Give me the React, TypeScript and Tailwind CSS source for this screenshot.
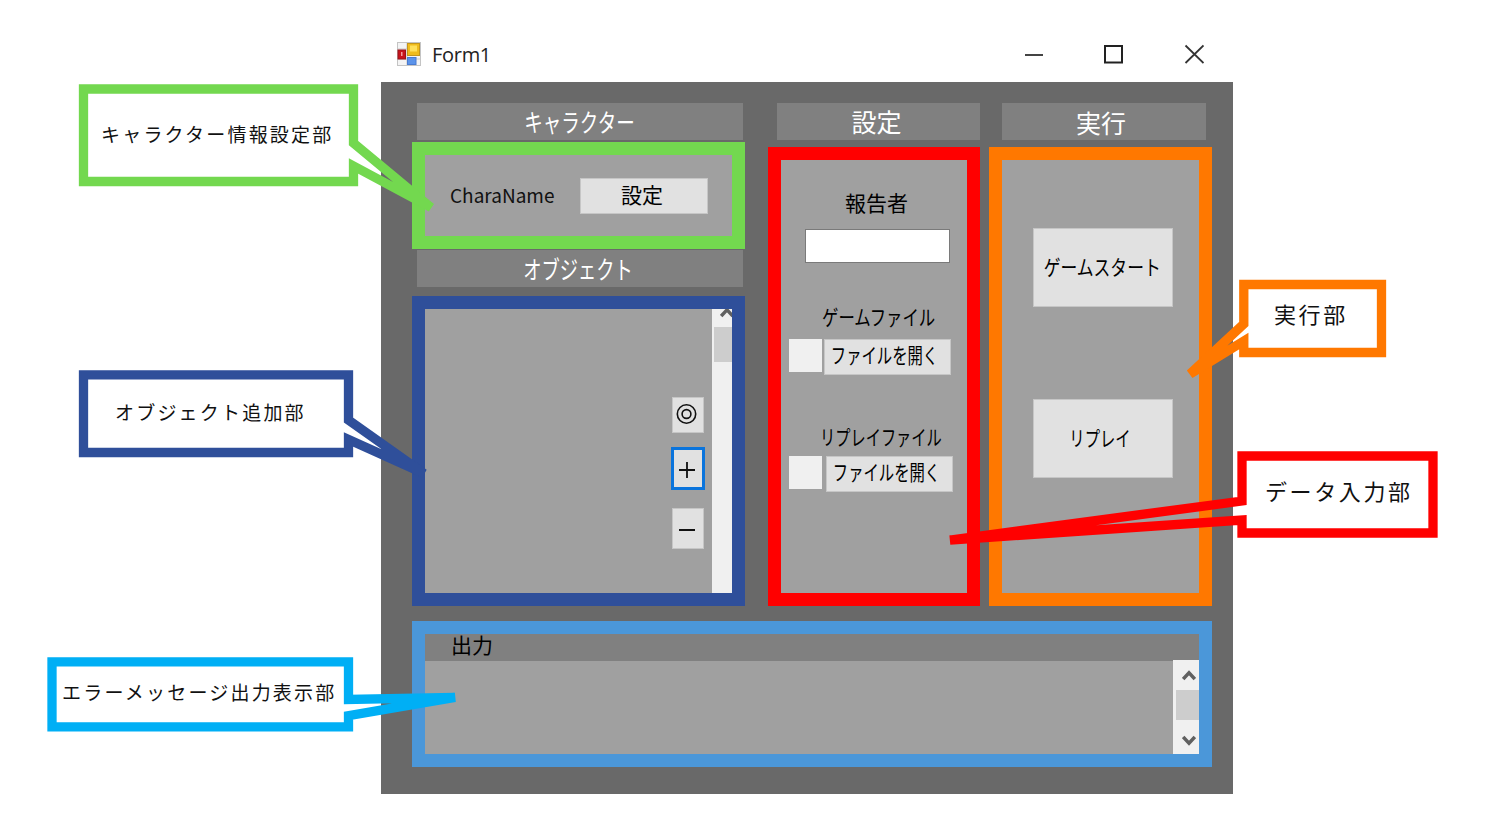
import type { ReactNode } from 'react';

function Header({ children, className = '' }: { children: ReactNode; className?: string }) {
  return (
    <div
      className={`flex h-[37px] shrink-0 items-center justify-center bg-[#808080] text-[25px] leading-none whitespace-nowrap text-white ${className}`}
    >
      {children}
    </div>
  );
}

function Button({ children, className = '' }: { children: ReactNode; className?: string }) {
  return (
    <button
      className={`flex shrink-0 items-center justify-center border border-[#c6c6c6] bg-[#e1e1e1] p-0 leading-none whitespace-nowrap text-black ${className}`}
    >
      {children}
    </button>
  );
}

function Chevron({ down = false }: { down?: boolean }) {
  return (
    <svg width="14" height="12" viewBox="0 0 14 12" className="block shrink-0">
      <path
        d={down ? 'M1.2 2 L7 8.2 L12.8 2' : 'M1.2 10 L7 3.8 L12.8 10'}
        fill="none"
        stroke="#606060"
        strokeWidth="3.4"
      />
    </svg>
  );
}

function FileRow({
  label,
  labelClass,
  buttonClass,
}: {
  label: string;
  labelClass: string;
  buttonClass: string;
}) {
  return (
    <div className="flex flex-col">
      <div className="flex h-[24px] items-center text-[21px] leading-none whitespace-nowrap">
        <span className={`inline-block origin-left ${labelClass}`}>{label}</span>
      </div>
      <div className="mt-[9px] ml-[8px] flex items-start">
        <div className="h-[33px] w-[33px] bg-[#f0f0f0]" />
        <Button className={`h-[36px] w-[127px] text-[21px] ${buttonClass}`}>
          <span className="inline-block -translate-x-[3px] -translate-y-[3px] scale-x-[0.73]">ファイルを開く</span>
        </Button>
      </div>
    </div>
  );
}

function AppIcon() {
  return (
    <svg width="24" height="24" viewBox="0 0 24 24" className="block">
      <rect x="0.5" y="0.5" width="23" height="23" fill="#f4f4f4" stroke="#c4c4c4" />
      <path d="M10 1V23M1 7H10M1 17H23" stroke="#c9c9c9" fill="none" />
      <rect x="1" y="8" width="7.5" height="9" fill="#c8141c" stroke="#98141a" />
      <rect x="4" y="10" width="1.5" height="4" fill="#f0a0a0" />
      <rect x="10.5" y="1.5" width="12" height="12" fill="#f0bc1c" stroke="#c4961c" />
      <rect x="13" y="3.5" width="7" height="6" fill="#ffe05a" />
      <rect x="10.5" y="15.5" width="8.5" height="7" fill="#5b93ea" stroke="#4a7bd0" />
    </svg>
  );
}

function TitleBar() {
  return (
    <div className="flex h-[52px] items-start bg-white">
      <div className="mt-[12px] ml-[16px]">
        <AppIcon />
      </div>
      <span className="mt-[13px] ml-[11px] font-['Open_Sans','Noto_Sans',sans-serif] text-[20px] leading-[24px] tracking-[-0.3px] text-[#222]">
        Form1
      </span>
      <div className="mt-[14px] mr-[29px] ml-auto flex gap-[61px]">
        <svg width="19" height="20" viewBox="0 0 19 20">
          <path d="M1 11H19" stroke="#444" strokeWidth="2" />
        </svg>
        <svg width="19" height="20" viewBox="0 0 19 20">
          <rect x="1" y="2" width="17" height="16.5" fill="none" stroke="#222" strokeWidth="2" />
        </svg>
        <svg width="20" height="20" viewBox="0 0 20 20">
          <path d="M1.5 1.5L19.5 19M19.5 1.5L1.5 19" stroke="#333" strokeWidth="1.8" />
        </svg>
      </div>
    </div>
  );
}

function CharacterColumn() {
  return (
    <div className="flex w-[333px] flex-col">
      <Header className="ml-[5px] w-[326px]">
        <span className="inline-block scale-x-[0.74]">キャラクター</span>
      </Header>
      <div className="mt-[2px] flex h-[107px] items-start border-[13px] border-[#73d84f] bg-[#a0a0a0]">
        <span className="mt-[28px] ml-[25px] w-[130px] text-[19px] leading-[24px] text-[#111]">CharaName</span>
        <Button className="mt-[23px] h-[36px] w-[128px] text-[21px]">
          <span className="inline-block -translate-x-[2px] -translate-y-[2px]">設定</span>
        </Button>
      </div>
      <Header className="mt-px ml-[5px] w-[326px]">
        <span className="inline-block -translate-x-[2px] scale-x-[0.73]">オブジェクト</span>
      </Header>
      <div className="mt-[9px] flex h-[310px] justify-end border-[13px] border-[#2f4f9a] bg-[#a0a0a0]">
        <div className="mr-[7px] flex w-[34px] flex-col items-center">
          <Button className="mt-[88px] h-[36px] w-[32px]">
            <svg
              width="22"
              height="22"
              viewBox="0 0 22 22"
              fill="none"
              stroke="#111"
              strokeWidth="1.6"
              className="-translate-x-px"
            >
              <circle cx="10.5" cy="10" r="9.2" />
              <circle cx="10.5" cy="10" r="4.4" />
            </svg>
          </Button>
          <button className="mt-[14px] flex h-[43px] w-[34px] items-center justify-center border-[3px] border-[#0a74dc] bg-[#e1e1e1]">
            <svg width="18" height="18" viewBox="0 0 18 18" className="-translate-x-px">
              <path d="M1 10H17M9 2V18" stroke="#111" strokeWidth="1.8" />
            </svg>
          </button>
          <Button className="mt-[18px] h-[41px] w-[32px]">
            <svg width="18" height="18" viewBox="0 0 18 18" className="-translate-x-px">
              <path d="M1 10H17" stroke="#111" strokeWidth="2" />
            </svg>
          </Button>
        </div>
        <div className="flex w-[20px] flex-col overflow-hidden bg-[#f0f0f0]">
          <div className="-mt-[3px] ml-[8px] h-[21px]">
            <Chevron />
          </div>
          <div className="ml-[2px] h-[35px] bg-[#cdcdcd]" />
        </div>
      </div>
    </div>
  );
}

function SettingsColumn() {
  return (
    <div className="ml-[23px] flex w-[212px] flex-col">
      <Header className="ml-[9px] w-[203px]">
        <span className="inline-block -translate-x-[2px]">設定</span>
      </Header>
      <div className="mt-[7px] flex h-[459px] flex-col border-[13px] border-[#ff0000] bg-[#a0a0a0] text-black">
        <span className="mt-[30px] ml-[64px] text-[21px] leading-[24px] whitespace-nowrap">報告者</span>
        <input
          aria-label="報告者"
          className="mt-[15px] ml-[24px] h-[34px] w-[145px] border border-[#7a7a7a] bg-white px-2 outline-none"
        />
        <div className="mt-[43px]">
          <FileRow
            label="ゲームファイル"
            labelClass="ml-[41px] -translate-y-[2px] scale-x-[0.78]"
            buttonClass="ml-[2px]"
          />
        </div>
        <div className="mt-[48px]">
          <FileRow
            label="リプレイファイル"
            labelClass="ml-[39px] translate-y-px scale-x-[0.725]"
            buttonClass="ml-[4px]"
          />
        </div>
      </div>
    </div>
  );
}

function RunColumn() {
  return (
    <div className="ml-[9px] flex w-[223px] flex-col">
      <Header className="ml-[13px] w-[204px]">
        <span className="inline-block -translate-x-[3px] translate-y-px">実行</span>
      </Header>
      <div className="mt-[7px] flex h-[459px] flex-col border-[13px] border-[#ff7800] bg-[#a0a0a0]">
        <Button className="mt-[68px] ml-[31px] h-[79px] w-[140px] text-[21px]">
          <span className="inline-block -translate-x-px -translate-y-px scale-x-[0.8]">ゲームスタート</span>
        </Button>
        <Button className="mt-[92px] ml-[31px] h-[79px] w-[140px] text-[21px]">
          <span className="inline-block -translate-x-[3px] -translate-y-px scale-x-[0.73]">リプレイ</span>
        </Button>
      </div>
    </div>
  );
}

function OutputPanel() {
  return (
    <div className="mt-[15px] flex h-[146px] w-[800px] flex-col border-[13px] border-[#4b97d9] bg-[#a0a0a0]">
      <div className="flex h-[27px] shrink-0 items-center bg-[#808080] pl-[26px] text-[21px] leading-none text-black">
        <span className="inline-block -translate-y-[3px]">出力</span>
      </div>
      <div className="-mt-px flex flex-1 justify-end">
        <div className="flex w-[26px] flex-col items-center bg-[#f0f0f0]">
          <div className="flex h-[30px] items-center pl-[5px]">
            <Chevron />
          </div>
          <div className="h-[30px] w-[23px] self-end bg-[#cdcdcd]" />
          <div className="flex flex-1 items-center pt-[8px] pl-[5px]">
            <Chevron down />
          </div>
        </div>
      </div>
    </div>
  );
}

const callouts = [
  { color: '#73d84f', points: '83.5,89 353.5,89 353.5,143 431,207.5 353.5,166 353.5,181.5 83.5,181.5' },
  { color: '#2f4f9a', points: '83.5,374.8 348.5,374.8 348.5,420 424,473.5 348.5,439.5 348.5,452.5 83.5,452.5' },
  { color: '#00aff5', points: '52,661.8 348.5,661.8 348.5,699.5 455,697.3 348.5,715.7 348.5,726.8 52,726.8' },
  { color: '#ff7800', points: '1243.8,284.5 1381.5,284.5 1381.5,352.5 1243.8,352.5 1243.8,341 1190,374 1243.8,324' },
  { color: '#ff0000', points: '1242,456 1433,456 1433,533 1242,533 1242,520 950,540 1242,501' },
];

export default function App() {
  return (
    <div className="relative h-[835px] w-[1496px] overflow-hidden bg-white pt-[30px] pl-[381px] font-['Noto_Sans_CJK_JP',sans-serif]">
      <div className="w-[852px]">
        <TitleBar />
        <div className="h-[712px] bg-[#696969] pt-[21px] pl-[31px]">
          <div className="flex items-start">
            <CharacterColumn />
            <SettingsColumn />
            <RunColumn />
          </div>
          <OutputPanel />
        </div>
      </div>

      <svg className="pointer-events-none absolute inset-0" width="1496" height="835" viewBox="0 0 1496 835">
        {callouts.map((c) => (
          <polygon key={c.color} points={c.points} fill="none" stroke={c.color} strokeWidth="9.3" strokeMiterlimit="3" />
        ))}
      </svg>
      <span className="absolute top-[120px] left-[101px] text-[19px] leading-[28px] tracking-[2.2px] whitespace-nowrap text-[#111]">
        キャラクター情報設定部
      </span>
      <span className="absolute top-[398px] left-[115px] text-[19px] leading-[28px] tracking-[2.2px] whitespace-nowrap text-[#111]">
        オブジェクト追加部
      </span>
      <span className="absolute top-[678px] left-[62px] text-[19px] leading-[28px] tracking-[2.2px] whitespace-nowrap text-[#111]">
        エラーメッセージ出力表示部
      </span>
      <span className="absolute top-[298px] left-[1274px] text-[22px] leading-[30px] tracking-[2.6px] whitespace-nowrap text-[#111]">
        実行部
      </span>
      <span className="absolute top-[475px] left-[1265px] text-[22px] leading-[30px] tracking-[2.6px] whitespace-nowrap text-[#111]">
        データ入力部
      </span>
    </div>
  );
}
